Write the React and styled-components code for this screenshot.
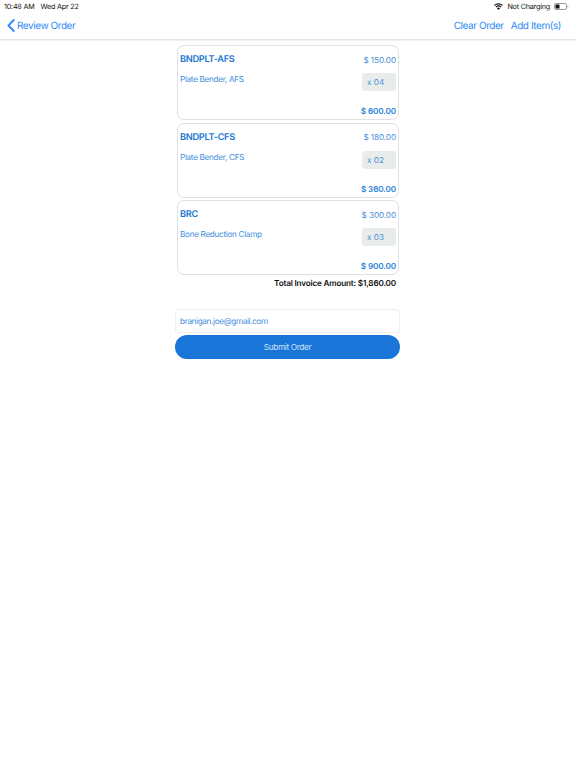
import React from "react";
import styled, { createGlobalStyle } from "styled-components";

const Global = createGlobalStyle`
  html, body { margin: 0; padding: 0; background: #fff; }
  body { font-family: Inter, "Liberation Sans", sans-serif; width: 576px; height: 768px; overflow: hidden; text-rendering: geometricPrecision; }
`;
const Page = styled.div`width: 576px; height: 768px; display: flex; flex-direction: column; background: #fff;`;
const StatusBar = styled.div`
  height: 12px; padding: 0 7px 0 4px; display: flex; align-items: center; justify-content: space-between;
  font-size: 7.2px; letter-spacing: -0.2px; color: #111;
`;
const StatusGroup = styled.div`display: flex; align-items: center; gap: ${p => p.$gap}px;`;
const NavBar = styled.div`
  height: 27px; padding: 0 15px 0 7px; display: flex; align-items: center; justify-content: space-between;
  border-bottom: 1px solid #e4e4e6; box-shadow: 0 1px 1px #f2f2f2;
`;
const NavButton = styled.div`display: flex; align-items: center; gap: 2px; color: #2f8cf6; font-size: 10px; letter-spacing: -0.44px;`;
const NavActions = styled.div`display: flex; gap: 7px;`;
const Main = styled.main`width: 225px; margin: 5px 0 0 175px; display: flex; flex-direction: column;`;
const Card = styled.div`
  box-sizing: border-box; height: 75px; margin: 0 1px 2.5px 1.5px; padding: 0 2px 0 2.5px;
  border: 1px solid #dfe1e3; border-radius: 7px; display: flex; flex-direction: column; background: #fff;
`;
const Row = styled.div`display: flex; justify-content: space-between; align-items: ${p => p.$align || "center"};`;
const TopRow = styled(Row)`height: 27px;`;
const Sku = styled.div`font-size: 9.2px; font-weight: 600; letter-spacing: -0.3px; color: #1976d2;`;
const Price = styled.div`font-size: 8.2px; letter-spacing: -0.1px; color: #4a90d9;`;
const Name = styled.div`font-size: 8.2px; letter-spacing: -0.32px; color: #3f8fdc; line-height: 13px;`;
const Qty = styled.div`
  box-sizing: border-box; width: 34px; height: 18px; padding-left: 5px; border-radius: 3px;
  background: #e8ecea; color: #4a90d9; font-size: 8.2px; display: flex; align-items: center;
`;
const LineTotal = styled.div`
  margin-top: auto; padding-bottom: 3px; text-align: right; font-size: 8.2px; font-weight: 600; letter-spacing: -0.15px; color: #2b83d9;
`;
const Total = styled.div`
  margin-top: -1px; padding-right: 4px; text-align: right; font-size: 8.2px; font-weight: 600; letter-spacing: -0.2px; color: #111; line-height: 12px;
`;
const Email = styled.div`
  box-sizing: border-box; height: 24px; margin-top: 20px; padding-left: 4px; border: 1px solid #eeeeee; border-radius: 3px;
  display: flex; align-items: center; font-size: 8.2px; letter-spacing: -0.36px; color: #3f8fdc;
`;
const Submit = styled.button`
  height: 24px; margin-top: 2px; border: 0; border-radius: 12px; background: #1976d8; color: #cfe2f7;
  font: 8.2px Inter, "Liberation Sans", sans-serif; letter-spacing: -0.33px; padding: 0;
`;

const items = [
  ["BNDPLT-AFS", "$ 150.00", "Plate Bender, AFS", "x 04", "$ 600.00"],
  ["BNDPLT-CFS", "$ 180.00", "Plate Bender, CFS", "x 02", "$ 360.00"],
  ["BRC", "$ 300.00", "Bone Reduction Clamp", "x 03", "$ 900.00"],
];

export default function App() {
  return (
    <Page>
      <Global />
      <StatusBar>
        <StatusGroup $gap={6}><span>10:48 AM</span><span>Wed Apr 22</span></StatusGroup>
        <StatusGroup $gap={4}>
          <svg width="9" height="7" viewBox="0 0 18 14" fill="#111">
            <path d="M9 14 6 10.6a4.4 4.4 0 0 1 6 0Z" />
            <path d="M4.6 9 3 7.2a8.8 8.8 0 0 1 12 0L13.4 9a6.4 6.4 0 0 0-8.8 0Z" />
            <path d="M1.6 5.7 0 3.9a13.4 13.4 0 0 1 18 0l-1.6 1.8a11 11 0 0 0-14.8 0Z" />
          </svg>
          <span>Not Charging</span>
          <svg width="15" height="7" viewBox="0 0 15 7">
            <rect x=".5" y=".5" width="12" height="6" rx="1.6" fill="none" stroke="#999" />
            <rect x="1.5" y="1.5" width="4" height="4" rx=".6" fill="#111" />
            <path d="M13.5 2.4c.7.2 1 .6 1 1.1s-.3.9-1 1.1Z" fill="#999" />
          </svg>
        </StatusGroup>
      </StatusBar>
      <NavBar>
        <NavButton>
          <svg width="8" height="13" viewBox="0 0 8 13" fill="none" stroke="#2f8cf6" strokeWidth="1.8" strokeLinecap="round" strokeLinejoin="round">
            <path d="M6.8 1 1.4 6.5l5.4 5.5" />
          </svg>
          Review Order
        </NavButton>
        <NavActions>
          <NavButton>Clear Order</NavButton>
          <NavButton>Add Item(s)</NavButton>
        </NavActions>
      </NavBar>
      <Main>
        {items.map(([sku, price, name, qty, total]) => (
          <Card key={sku}>
            <TopRow><Sku>{sku}</Sku><Price>{price}</Price></TopRow>
            <Row $align="flex-start"><Name>{name}</Name><Qty>{qty}</Qty></Row>
            <LineTotal>{total}</LineTotal>
          </Card>
        ))}
        <Total>Total Invoice Amount: $1,860.00</Total>
        <Email>branigan.joe@gmail.com</Email>
        <Submit>Submit Order</Submit>
      </Main>
    </Page>
  );
}
